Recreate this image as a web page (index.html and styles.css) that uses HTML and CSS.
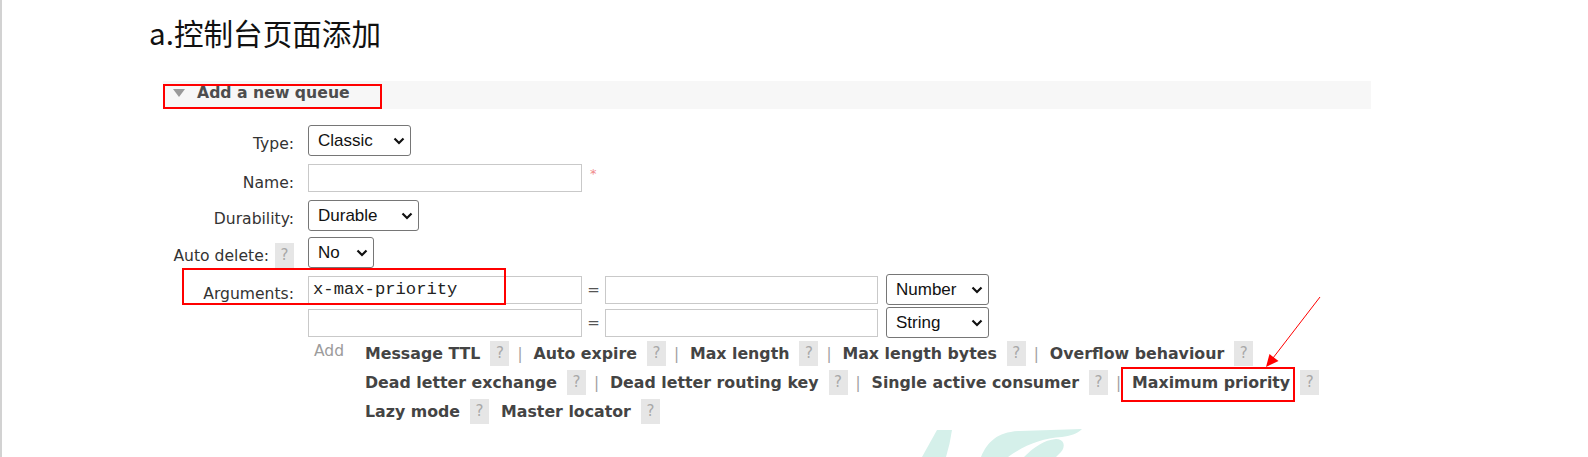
FILE: index.html
```html
<!DOCTYPE html>
<html lang="zh">
<head>
<meta charset="utf-8">
<title>Add a new queue</title>
<link rel="stylesheet" href="styles.css">
</head>
<body>
<div class="page">
  <h1 class="title">a.控制台页面添加</h1>
  <div class="section">
    <div class="section-head"><span class="tri"></span><span class="head-text">Add a new queue</span></div>
    <div class="form">
      <div class="lbl">Type:</div>
      <div class="ctl">
        <div class="sel w-type"><span>Classic</span><svg class="chev" width="12" height="8" viewBox="0 0 12 8"><path d="M1.5 1.5 L6 6 L10.5 1.5" fill="none" stroke="#111" stroke-width="2.2"/></svg></div>
      </div>

      <div class="lbl lbl-name">Name:</div>
      <div class="ctl name-ctl"><div class="inp w-key"></div><span class="req">*</span></div>

      <div class="lbl">Durability:</div>
      <div class="ctl">
        <div class="sel w-dur"><span>Durable</span><svg class="chev" width="12" height="8" viewBox="0 0 12 8"><path d="M1.5 1.5 L6 6 L10.5 1.5" fill="none" stroke="#111" stroke-width="2.2"/></svg></div>
      </div>

      <div class="lbl lbl-help">Auto delete:<span class="help">?</span></div>
      <div class="ctl">
        <div class="sel w-no"><span>No</span><svg class="chev" width="12" height="8" viewBox="0 0 12 8"><path d="M1.5 1.5 L6 6 L10.5 1.5" fill="none" stroke="#111" stroke-width="2.2"/></svg></div>
      </div>

      <div class="lbl lbl-args">Arguments:</div>
      <div class="ctl args">
        <div class="arg-row">
          <div class="inp w-key mono">x-max-priority</div>
          <span class="eq">=</span>
          <div class="inp w-val"></div>
          <div class="sel w-arg"><span>Number</span><svg class="chev" width="12" height="8" viewBox="0 0 12 8"><path d="M1.5 1.5 L6 6 L10.5 1.5" fill="none" stroke="#111" stroke-width="2.2"/></svg></div>
        </div>
        <div class="arg-row">
          <div class="inp w-key"></div>
          <span class="eq">=</span>
          <div class="inp w-val"></div>
          <div class="sel w-arg"><span>String</span><svg class="chev" width="12" height="8" viewBox="0 0 12 8"><path d="M1.5 1.5 L6 6 L10.5 1.5" fill="none" stroke="#111" stroke-width="2.2"/></svg></div>
        </div>
        <div class="add-row">
          <span class="add">Add</span>
          <div class="links">
            <div class="link-line">
              <span class="link">Message TTL</span><span class="help">?</span><span class="sep">|</span>
              <span class="link">Auto expire</span><span class="help">?</span><span class="sep">|</span>
              <span class="link">Max length</span><span class="help">?</span><span class="sep">|</span>
              <span class="link">Max length bytes</span><span class="help">?</span><span class="sep">|</span>
              <span class="link">Overflow behaviour</span><span class="help">?</span>
            </div>
            <div class="link-line">
              <span class="link">Dead letter exchange</span><span class="help">?</span><span class="sep">|</span>
              <span class="link">Dead letter routing key</span><span class="help">?</span><span class="sep">|</span>
              <span class="link">Single active consumer</span><span class="help">?</span><span class="sep">|</span>
              <span class="link">Maximum priority</span><span class="help">?</span>
            </div>
            <div class="link-line">
              <span class="link">Lazy mode</span><span class="help">?</span>
              <span class="link gap-left">Master locator</span><span class="help">?</span>
            </div>
          </div>
        </div>
      </div>
    </div>
  </div>

  <div class="mark mark-head"></div>
  <div class="mark mark-args"></div>
  <div class="mark mark-prio"></div>

  <svg class="arrow" width="1588" height="457" viewBox="0 0 1588 457">
    <line x1="1320" y1="297" x2="1273" y2="358" stroke="#ff0000" stroke-width="1"/>
    <polygon points="1266,367 1269.5,354 1278.5,361" fill="#ff0000"/>
  </svg>

  <svg class="watermark" width="1588" height="457" viewBox="0 0 1588 457">
    <path d="M937 430 L952 430 Q950 444 946 457 L922 457 Z" fill="#d5f0ea"/>
    <path d="M981 457 C988 441 998 432 1020 431 L1082 429 C1077 434 1070 436 1062 437 C1042 438 1025 445 1008 457 Z" fill="#d5f0ea"/>
    <path d="M1024 457 C1034 447 1044 440 1056 439 C1064 439 1066 446 1061 452 L1056 457 Z" fill="#d5f0ea"/>
  </svg>
</div>
</body>
</html>
```

FILE: styles.css
```css
body {
  margin: 0;
  background: #ffffff;
  font-family: "DejaVu Sans", Verdana, sans-serif;
}

.page {
  position: relative;
  width: 1588px;
  height: 457px;
  overflow: hidden;
  background: #ffffff;
}

.page::before {
  content: "";
  position: absolute;
  left: 0;
  top: 0;
  bottom: 0;
  width: 2px;
  background: #d2d2d2;
}

.title {
  margin: 0;
  padding: 16px 0 0 149px;
  font-family: "Noto Sans CJK SC", sans-serif;
  font-weight: 400;
  font-size: 29.6px;
  line-height: 34px;
  color: #111111;
}

.section {
  margin: 31px 0 0 163px;
  width: 1208px;
}

.section-head {
  height: 28px;
  box-sizing: border-box;
  background: #f7f7f7;
  display: flex;
  align-items: center;
  gap: 12px;
  padding: 0 0 4px 10px;
}

.tri {
  width: 0;
  height: 0;
  border-left: 6px solid transparent;
  border-right: 6px solid transparent;
  border-top: 8px solid #9a9a9a;
}

.head-text {
  font-weight: bold;
  font-size: 15.7px;
  line-height: 18px;
  color: #4d4d4d;
}

.form {
  display: grid;
  grid-template-columns: 131px auto;
  column-gap: 14px;
  row-gap: 6px;
  padding-top: 16px;
  align-items: start;
  justify-content: start;
}

.lbl {
  text-align: right;
  font-size: 15.6px;
  line-height: 18px;
  padding-top: 10px;
  color: #333333;
}

.lbl-name {
  padding-top: 12px;
}

.lbl-help {
  display: flex;
  justify-content: flex-end;
  align-items: center;
  padding-top: 6px;
  gap: 6px;
}

.lbl-args {
  padding-top: 11px;
}

.ctl {
  display: flex;
  align-items: center;
}

.name-ctl {
  margin: 2px 0;
}

.sel {
  display: flex;
  align-items: center;
  justify-content: space-between;
  height: 31px;
  box-sizing: border-box;
  border: 1px solid #767676;
  border-radius: 3px;
  padding: 0 5px 0 9px;
  background: #ffffff;
  font-family: "Liberation Sans", Arial, sans-serif;
  font-size: 17px;
  color: #111111;
}

.chev {
  display: block;
  flex: none;
}

.w-type { width: 103px; }
.w-dur { width: 111px; }
.w-no { width: 66px; }
.w-arg { width: 103px; }

.inp {
  height: 28px;
  box-sizing: border-box;
  border: 1px solid #c9c9c9;
  background: #ffffff;
}

.w-key { width: 274px; }
.w-val { width: 273px; }

.mono {
  font-family: "Liberation Mono", "Courier New", monospace;
  font-size: 17.2px;
  line-height: 26px;
  padding-left: 4px;
  color: #222222;
}

.req {
  margin-left: 8px;
  margin-top: -10px;
  color: #f08a8a;
  font-size: 13px;
}

.args {
  flex-direction: column;
  align-items: flex-start;
  gap: 2px;
}

.arg-row {
  display: flex;
  align-items: center;
  height: 31px;
}

.eq {
  width: 23px;
  text-align: center;
  font-size: 15px;
  color: #555555;
}

.arg-row .sel {
  margin-left: 8px;
}

.add-row {
  display: flex;
  align-items: flex-start;
  margin-top: 1px;
}

.add {
  width: 57px;
  flex: none;
  box-sizing: border-box;
  padding: 1px 0 0 6px;
  font-size: 15.5px;
  line-height: 18px;
  color: #9c9c9c;
}

.links {
  display: flex;
  flex-direction: column;
  gap: 4px;
}

.link-line {
  display: flex;
  align-items: center;
  height: 25px;
  white-space: nowrap;
}

.link {
  font-weight: bold;
  font-size: 15.8px;
  line-height: 18px;
  color: #444444;
}

.help {
  display: inline-block;
  width: 19px;
  height: 25px;
  line-height: 25px;
  text-align: center;
  background: #e6e6e6;
  color: #a8a8a8;
  font-size: 15px;
  font-weight: normal;
}

.link + .help {
  margin-left: 10px;
}

.sep {
  width: 5px;
  margin: 0 11px 0 8px;
  text-align: center;
  color: #a0a0a0;
  font-size: 15px;
}

.gap-left {
  margin-left: 12px;
}

.mark {
  position: absolute;
  box-sizing: border-box;
  border: 2px solid #ff0000;
}

.mark-head {
  left: 163px;
  top: 84px;
  width: 219px;
  height: 25px;
}

.mark-args {
  left: 182px;
  top: 268px;
  width: 324px;
  height: 37px;
}

.mark-prio {
  left: 1121px;
  top: 367px;
  width: 174px;
  height: 35px;
}

.arrow,
.watermark {
  position: absolute;
  left: 0;
  top: 0;
  pointer-events: none;
}
```
